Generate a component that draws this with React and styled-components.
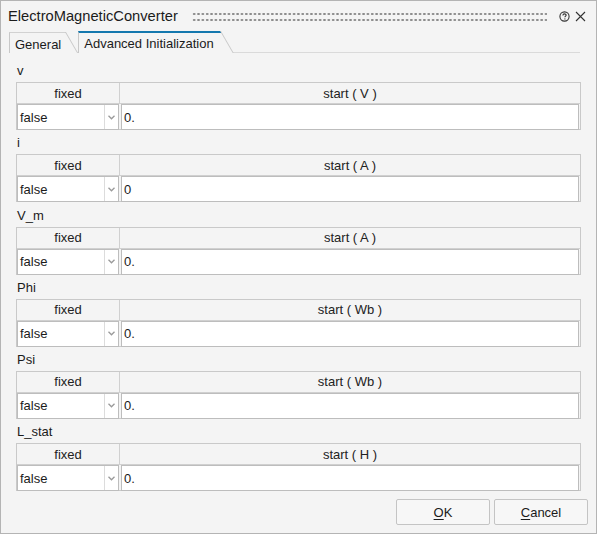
import React from 'react'
import styled, {createGlobalStyle} from "styled-components";

const GlobalStyle = createGlobalStyle`
  body {
    margin: 0;
    background: #ffffff;
    font-family: "Liberation Sans", Arial, sans-serif;
  }
`

const Window = styled.div`
  width: 597px;
  height: 534px;
  box-sizing: border-box;
  border: 1px solid #b4b4b4;
  background: #f4f4f4;
  display: flex;
  flex-direction: column;
  color: #1b1b1b;
`

const TitleBar = styled.div`
  height: 30px;
  display: flex;
  align-items: center;
  padding: 0 10px 0 7px;
`

const Title = styled.div`
  font-size: 14.7px;
`

const Grip = styled.div`
  flex: 1;
  height: 12px;
  margin: 2px 12px 0 14px;
  background-image: radial-gradient(circle at center, #8a8a8a 0.95px, transparent 1.25px);
  background-size: 4.35px 6px;
`

const TitleIcons = styled.div`
  display: flex;
  align-items: center;
  gap: 5px;
  margin-top: 1px;
`

const TabBar = styled.div`
  height: 22px;
  display: flex;
  align-items: stretch;
  padding-left: 8px;
`

// tabs get a slanted right edge drawn by a skewed 1px line
const Tab = styled.div`
  position: relative;
  box-sizing: border-box;
  font-size: 13px;
  white-space: nowrap;
  display: flex;
  align-items: center;
  padding: ${props => props.active ? "1px 7px 0 5px" : "2px 5px 0 5px"};
  margin-top: ${props => props.active ? "0" : "1px"};
  margin-right: ${props => props.active ? "0" : "12px"};
  border-left: 1px solid #c8c8c8;
  border-top: ${props => props.active ? "2px solid #1478ae" : "1px solid #d2d2d2"};

  &::after {
    content: "";
    position: absolute;
    top: ${props => props.active ? "-2px" : "-1px"};
    right: 0;
    width: 1px;
    height: calc(100% + ${props => props.active ? "2px" : "1px"});
    background: #c8c8c8;
    transform-origin: top left;
    transform: skewX(30deg);
  }
`

const TabLine = styled.div`
  flex: 1;
  margin-left: 12px;
  margin-right: 16px;
  border-bottom: 1px solid #dadada;
`

const Content = styled.div`
  flex: 1;
  padding: 5px 15px 0 15px;
`

const Group = styled.div`
  margin-top: 5.2px;
`

const Label = styled.div`
  font-size: 13px;
  line-height: 16px;
  padding-left: 1px;
  margin-bottom: 3px;
`

const Table = styled.div`
  display: grid;
  grid-template-columns: 103px 1fr;
  grid-template-rows: 21px 27px;
  border: 1px solid #c9c9c9;
  box-sizing: border-box;
  height: 48px;
`

const HeaderCell = styled.div`
  font-size: 13px;
  color: #222;
  display: flex;
  align-items: center;
  justify-content: center;
  border-bottom: 1px solid #d0d0d0;
  border-right: ${props => props.first ? "1px solid #d0d0d0" : "none"};
`

const DataCell = styled.div`
  display: flex;
  padding: 0 1px 1px ${props => props.first ? "0" : "1px"};
`

const Select = styled.div`
  flex: 1;
  display: flex;
  background: #ffffff;
  border: 1px solid #bdbdbd;
`

const SelectValue = styled.div`
  flex: 1;
  font-size: 13px;
  display: flex;
  align-items: center;
  padding-left: 2px;
`

const SelectArrow = styled.div`
  width: 13px;
  border-left: 1px solid #dcdcdc;
  display: flex;
  align-items: center;
  justify-content: center;
`

const Input = styled.div`
  flex: 1;
  background: #ffffff;
  border: 1px solid #bdbdbd;
  font-size: 13px;
  display: flex;
  align-items: center;
  padding-left: 2px;
`

const Footer = styled.div`
  display: flex;
  justify-content: flex-end;
  gap: 4px;
  padding: 0 8px 8px;
`

const Button = styled.div`
  width: 94px;
  height: 26px;
  box-sizing: border-box;
  border: 1px solid #c4c4c4;
  border-radius: 2px;
  background: #f7f7f7;
  font-size: 13px;
  display: flex;
  align-items: center;
  justify-content: center;

  u {
    text-underline-offset: 2px;
  }
`

const HelpIcon = () => (
  <svg width="11" height="11" viewBox="0 0 11 11">
    <circle cx="5.5" cy="5.5" r="4.6" fill="none" stroke="#333" strokeWidth="1.1" />
    <path d="M3.9 4.4 C3.9 3.3 4.7 2.9 5.5 2.9 C6.4 2.9 7.1 3.5 7.1 4.2 C7.1 5.1 5.9 5.2 5.9 6.3"
      fill="none" stroke="#333" strokeWidth="1.1" />
    <circle cx="5.9" cy="7.9" r="0.65" fill="#333" />
  </svg>
)

const CloseIcon = () => (
  <svg width="11" height="11" viewBox="0 0 11 11">
    <path d="M1 1 L10 10 M10 1 L1 10" stroke="#333" strokeWidth="1.1" />
  </svg>
)

const Chevron = () => (
  <svg width="7" height="5" viewBox="0 0 7 5">
    <path d="M0.5 0.8 L3.5 3.8 L6.5 0.8" fill="none" stroke="#9a9a9a" strokeWidth="1.3" />
  </svg>
)

const variables = [
  {name: "v", unit: "V", value: "0."},
  {name: "i", unit: "A", value: "0"},
  {name: "V_m", unit: "A", value: "0."},
  {name: "Phi", unit: "Wb", value: "0."},
  {name: "Psi", unit: "Wb", value: "0."},
  {name: "L_stat", unit: "H", value: "0."},
]

const App = () => {
  return (
    <>
      <GlobalStyle />
      <Window>
        <TitleBar>
          <Title>ElectroMagneticConverter</Title>
          <Grip />
          <TitleIcons>
            <HelpIcon />
            <CloseIcon />
          </TitleIcons>
        </TitleBar>
        <TabBar>
          <Tab>General</Tab>
          <Tab active>Advanced Initialization</Tab>
          <TabLine />
        </TabBar>
        <Content>
          {variables.map((item) => (
            <Group key={item.name}>
              <Label>{item.name}</Label>
              <Table>
                <HeaderCell first>fixed</HeaderCell>
                <HeaderCell>start ( {item.unit} )</HeaderCell>
                <DataCell first>
                  <Select>
                    <SelectValue>false</SelectValue>
                    <SelectArrow><Chevron /></SelectArrow>
                  </Select>
                </DataCell>
                <DataCell>
                  <Input>{item.value}</Input>
                </DataCell>
              </Table>
            </Group>
          ))}
        </Content>
        <Footer>
          <Button><u>O</u>K</Button>
          <Button><u>C</u>ancel</Button>
        </Footer>
      </Window>
    </>
  )
}

export default App;
